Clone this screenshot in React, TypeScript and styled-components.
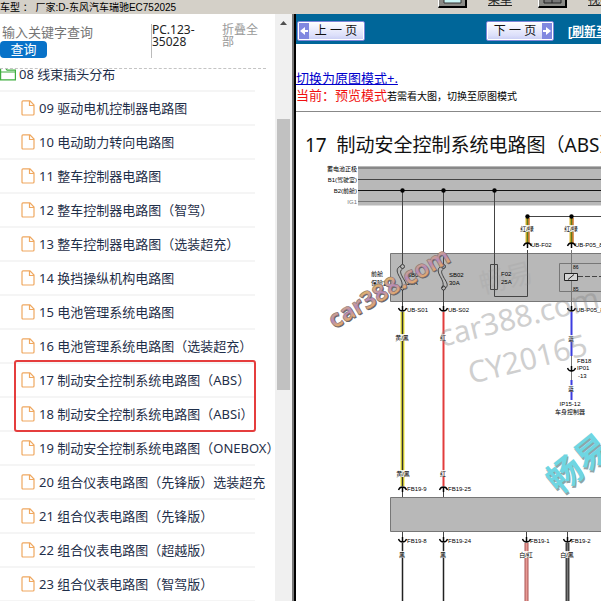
import React from "react";
import styled, { createGlobalStyle, css } from "styled-components";

const sans = `"Noto Sans", "Noto Sans CJK SC", sans-serif`;
const arial = `"Liberation Sans", "Noto Sans CJK SC", sans-serif`;

const GlobalStyle = createGlobalStyle`
  *, *::before, *::after { box-sizing: border-box; }
  body { margin: 0; background: #fff; font-family: ${sans}; overflow: hidden; }
`;

const Page = styled.div`
  display: flex;
  flex-direction: column;
  height: 100vh;
`;

const TopBar = styled.header`
  display: flex;
  flex: none;
  justify-content: space-between;
  height: 14px;
  overflow: hidden;
  background: #d4d0c8;
`;

const TopInfo = styled.div`
  display: flex;
  flex-direction: column;
`;

const TabEdges = styled.div`
  display: flex;
  gap: 5px;
  height: 1px;
`;

const TabEdge = styled.span<{ $width: number }>`
  width: ${(p) => p.$width}px;
  background: #000;
`;

const Vehicle = styled.div`
  height: 16px;
  font: 10px/16px ${arial};
  white-space: pre;
`;

const Tools = styled.nav`
  display: flex;
  flex: none;
  gap: 21px;
  height: 8px;
  align-items: flex-end;
`;

const ToolIcon = styled.button`
  width: 29px;
  height: 24px;
  padding: 0;
  border: 2px solid #000;
  border-left-color: #fff;
  border-width: 0 2px 2px 1px;
  background: #8a8a86;
  svg { display: block; width: 100%; height: 100%; }
`;

const ToolLink = styled.a<{ $last?: boolean }>`
  width: ${(p) => (p.$last ? 13 : 29)}px;
  overflow: hidden;
  color: #222;
  font: 12px/16px ${arial};
  white-space: nowrap;
`;

const Body = styled.div`
  display: flex;
  flex: 1;
  min-height: 0;
`;

const Sidebar = styled.aside`
  display: flex;
  flex: none;
  width: 292px;
`;

const Panel = styled.div`
  display: flex;
  flex: 1;
  flex-direction: column;
  min-width: 0;
  overflow: hidden;
`;

const SearchForm = styled.form`
  display: flex;
  flex: none;
  height: 55px;
  margin-right: 9px;
  padding-top: 10px;
  border-bottom: 1px dashed #c4c4c4;
`;

const SearchFields = styled.div`
  display: flex;
  flex-direction: column;
  align-items: flex-start;
  width: 151px;
`;

const SearchInput = styled.input`
  width: 140px;
  height: 17px;
  padding: 0 2px;
  border: 0;
  outline: 0;
  background: transparent;
  font: 13px/17px ${sans};
  &::placeholder { color: #757575; opacity: 1; }
`;

const SearchButton = styled.button`
  width: 47px;
  height: 17px;
  padding: 0;
  border: 0;
  border-radius: 4px;
  background: #0872c8;
  color: #fff;
  font: 13px/17px ${sans};
`;

const Code = styled.div`
  width: 71px;
  height: 34px;
  border-left: 1px solid #bbb;
  font: 12px/12px ${sans};
  color: #222;
`;

const Collapse = styled.button`
  width: 38px;
  height: 24px;
  padding: 0;
  border: 0;
  background: none;
  color: #999;
  font: 12px/12px ${sans};
  text-align: left;
`;

const TreeViewport = styled.div`
  flex: 1;
  min-height: 0;
  overflow: hidden;
`;

const Tree = styled.ul`
  margin: -11px 0 0;
  padding: 0;
  list-style: none;
`;

const Row = styled.li<{ $root?: boolean }>`
  display: flex;
  align-items: center;
  gap: ${(p) => (p.$root ? 3 : 4)}px;
  width: 255px;
  height: 34px;
  padding-left: ${(p) => (p.$root ? 0 : 21)}px;
  border-bottom: 2px solid #f5f5f5;
  svg { flex: none; }
`;

const RowLink = styled.a`
  color: #1f2f4a;
  font: 13px/20px ${sans};
  text-decoration: none;
  white-space: nowrap;
`;

const Marked = styled.li`
  position: relative;
  list-style: none;
  ul { margin: 0; padding: 0; }
  &::after {
    content: "";
    position: absolute;
    inset: -4px auto 0 14px;
    width: 242px;
    border: 2px solid #e53d3d;
    border-radius: 3px;
    pointer-events: none;
  }
`;

const Scrollbar = styled.div`
  display: flex;
  flex: none;
  flex-direction: column;
  align-items: center;
  width: 17px;
  padding-top: 6px;
  background: #f0f0f0;
`;

const Thumb = styled.div`
  width: 13px;
  height: 271px;
  margin-top: 93px;
  background: #c1c1c1;
`;

const Splitter = styled.div`
  flex: none;
  width: 4px;
  border-left: 2px solid #777;
  background: #000;
`;

const Main = styled.main`
  flex: 1;
  min-width: 0;
  overflow: hidden;
`;

const Pager = styled.nav`
  display: flex;
  align-items: center;
  height: 30px;
  padding: 3px 0 0 1px;
  background: #069;
`;

const PageButton = styled.button<{ $next?: boolean }>`
  display: flex;
  flex: none;
  flex-direction: ${(p) => (p.$next ? "row-reverse" : "row")};
  width: 68px;
  height: 20px;
  padding: 1px;
  border: 1px solid #7f86d8;
  border-radius: 2px;
  background: linear-gradient(#fff, #dcdffa 75%, #c7ccf4);
  box-shadow: inset 0 0 0 1px #fff;
  color: #111;
  font: 12px/16px ${arial};
  span { flex: 1; text-align: center; white-space: nowrap; }
  svg { flex: none; }
  ${(p) => p.$next && css`margin-left: 121px;`}
`;

const Refresh = styled.a`
  margin: 2px 0 0 14px;
  color: #fff;
  font: bold 12px/18px ${arial};
  white-space: nowrap;
`;

const Mode = styled.section`
  height: 68px;
  padding-top: 26px;
  border-bottom: 1px solid #888;
`;

const ModeLine = styled.p`
  margin: 0;
  height: 17px;
  color: #f01010;
  font: 13px/17px ${sans};
  white-space: nowrap;
  small { color: #000; font-size: 10px; }
  a { color: #00c; }
`;

const Title = styled.h1`
  margin: 19px 0 0 9px;
  height: 27px;
  color: #111;
  font: 19px/28px ${sans};
  white-space: pre;
`;

const Diagram = styled.svg`
  display: block;
  width: 400px;
  height: 460px;
  font-family: ${arial};
  font-size: 6px;
`;

const FileIcon = () => (
  <svg width="14" height="16" viewBox="0 0 14 16" fill="none" stroke="#efa860" strokeWidth="1.2" aria-hidden>
    <path d="M2 .8h7l4 4.2v9q0 1-1 1H2q-1 0-1-1V2q0-1.200 1-1.200ZM8.500 1v4.500H13" />
  </svg>
);

const FolderIcon = () => (
  <svg width="16" height="14" viewBox="0 0 16 14" fill="none" stroke="#3fae3f" strokeWidth="1.2" aria-hidden>
    <path d="M.6 12.800V1.200h5l1.500 2h8.300v9.600ZM.6 5h15" />
  </svg>
);

const Arrow = ({ next }: { next?: boolean }) => (
  <svg width="10" height="16" viewBox="0 0 10 16" aria-hidden>
    <path fill="#8088e0" d="M0 0h10v16H0z" />
    <path fill="#fff" d={next ? "M1 7h3V4l5 4-5 4V9H1Z" : "M9 7H6V4L1 8l5 4V9h3Z"} />
  </svg>
);

const before = [
  "09 驱动电机控制器电路图",
  "10 电动助力转向电路图",
  "11 整车控制器电路图",
  "12 整车控制器电路图（智驾）",
  "13 整车控制器电路图（选装超充）",
  "14 换挡操纵机构电路图",
  "15 电池管理系统电路图",
  "16 电池管理系统电路图（选装超充）",
];
const marked = ["17 制动安全控制系统电路图（ABS）", "18 制动安全控制系统电路图（ABSi）"];
const after = [
  "19 制动安全控制系统电路图（ONEBOX）",
  "20 组合仪表电路图（先锋版）选装超充",
  "21 组合仪表电路图（先锋版）",
  "22 组合仪表电路图（超越版）",
  "23 组合仪表电路图（智驾版）",
];

const TreeRow = ({ text }: { text: string }) => (
  <Row>
    <FileIcon />
    <RowLink href="#">{text}</RowLink>
  </Row>
);

/* Socket opening upward (pin enters from above) or downward. */
const Socket = ({ x, y, down }: { x: number; y: number; down?: boolean }) => (
  <g fill="none" stroke="#000">
    <path strokeWidth="1.300" d={down ? `M${x - 4} ${y + 3}q1-3 4-3t4 3` : `M${x - 4} ${y - 3}q1 3 4 3t4-3`} />
    <path strokeWidth="1.500" d={down ? `M${x} ${y}v5` : `M${x} ${y}v-5`} />
  </g>
);

const WireLabel = ({ x, y, children }: { x: number; y: number; children: string }) => {
  const w = children.length > 1 ? 15 : 7;
  return (
    <g>
      <rect x={x - w / 2} y={y - 6} width={w} height="7" fill="#fff" opacity=".85" />
      <text x={x} y={y} textAnchor="middle">{children}</text>
    </g>
  );
};

const Fuse = ({ x }: { x: number }) => (
  <g fill="none" stroke="#222" strokeWidth=".8">
    <circle cx={x} cy="266.500" r="2" fill="#b8b8b8" />
    <circle cx={x} cy="288" r="2" fill="#b8b8b8" />
    <path d={`M${x - 2} 266c-4 2-4 5-2 9s5 8 3 13M${x} 269c-3 2-2 4 0 8s6 8 2 11`} />
  </g>
);

const Circuit = () => (
  <Diagram viewBox="296 158 400 460" role="img" aria-label="ABS">
    <path fill="#b8b8b8" d="M358 166h338v39.500H358z" />
    <path stroke="#888" strokeWidth="2" d="M358 168h338" />
    <path stroke="#444" d="M358 179.500h338" />
    <path stroke="#111" d="M358 190.500h338" />
    <path stroke="#777" d="M358 201.500h338" />
    <g textAnchor="end">
      <text x="357" y="171">蓄电池正极</text>
      <text x="357" y="182">B1(驾驶室)</text>
      <text x="357" y="193">B2(前舱)</text>
      <text x="357" y="204" fill="#777">IG1</text>
    </g>

    <path fill="#b8b8b8" stroke="#777" d="M390.500 253.500H700v48H390.500z" />
    <path fill="#b8b8b8" stroke="#777" d="M390.500 497.500H700v34H390.500z" />

    <g fill="none" stroke="#444">
      <path d="M402.500 191v73M402.500 290v16M443.500 191v73M443.500 290v16" />
      <path d="M494.500 191v105.500h33V250M527.500 216.500H700" />
      <path d="M571.500 250v56M571.500 354v26" stroke="#777" />
      <path d="M402.500 490v7M443.500 490v7M402.500 532v7M443.500 532v7M526.500 532v7M567.500 532v7" />
    </g>
    <g fill="#000">
      <circle cx="402.500" cy="190.500" r="2.200" />
      <circle cx="443.500" cy="190.500" r="2.200" />
      <circle cx="494.500" cy="190.500" r="2.200" />
    </g>

    <path stroke="#e0b52a" strokeWidth="4" d="M527.500 218v25M571.500 218v25" />
    <path stroke="#5b7a22" strokeWidth="1.500" d="M527.500 218v25M571.500 218v25" />
    <path stroke="#c25434" d="M529 218v25M573 218v25" />
    <g fill="#000">
      <circle cx="527.500" cy="216.500" r="2.200" />
      <circle cx="571.500" cy="216.500" r="2.200" />
    </g>
    <WireLabel x={527} y={231}>红/绿</WireLabel>
    <WireLabel x={571} y={231}>红/绿</WireLabel>
    <Socket x={527.5} y={243} down />
    <Socket x={571.5} y={243} down />
    <text x="531" y="247">UB-F02</text>
    <text x="575" y="247">UB-P05_8</text>

    <text x="371" y="276">前舱</text>
    <text x="371" y="285">保险盒</text>
    <Fuse x={402.5} />
    <Fuse x={443.5} />
    <text x="407" y="277">SB01</text>
    <text x="407" y="285">25A</text>
    <text x="449" y="277">SB02</text>
    <text x="449" y="285">30A</text>
    <path fill="none" stroke="#444" d="M490.500 264.500h7v25h-7z" />
    <text x="501" y="276">F02</text>
    <text x="501" y="284">25A</text>
    <path fill="none" stroke="#777" d="M559.500 263.500H640v28h-80.500z" />
    <path fill="#d5d5d5" stroke="#222" d="M564.500 273.500h13v7h-13zM568 279.500l6-5" />
    <path stroke="#444" strokeDasharray="5 2" d="M578 276.500h60" />
    <text x="573" y="269" fontSize="5">86</text>
    <text x="573" y="291" fontSize="5">85</text>

    <path stroke="#f2ea38" strokeWidth="4" d="M402.500 312v174" />
    <path stroke="#333" strokeWidth="1.500" d="M402.500 312v174" />
    <path stroke="#e23c3c" strokeWidth="2" d="M443.500 312v174" />
    <path stroke="#3c3ce0" strokeWidth="2" d="M571.500 312v44M571.500 380v20" />
    <Socket x={402.5} y={311} />
    <Socket x={443.5} y={311} />
    <Socket x={571.5} y={311} />
    <Socket x={571.5} y={371} />
    <text x="407" y="312">UB-S01</text>
    <text x="448" y="312">UB-S02</text>
    <text x="576" y="312">UB-P05_8</text>
    <WireLabel x={402} y={340}>黄/黑</WireLabel>
    <WireLabel x={443} y={340}>红</WireLabel>
    <WireLabel x={571} y={341}>蓝</WireLabel>
    <WireLabel x={571} y={391}>蓝</WireLabel>
    <text x="577" y="363">FB18</text>
    <text x="577" y="370">IP01</text>
    <text x="578" y="378">-13</text>
    <text x="570" y="406" textAnchor="middle">IP15-12</text>
    <text x="570" y="414" textAnchor="middle">车身控制器</text>

    <WireLabel x={403} y={476}>黄/黑</WireLabel>
    <WireLabel x={443} y={476}>红</WireLabel>
    <Socket x={402.5} y={487} down />
    <Socket x={443.5} y={487} down />
    <text x="407" y="491">FB19-9</text>
    <text x="448" y="491">FB19-25</text>

    <path stroke="#222" strokeWidth="1.500" d="M402.500 543v75M443.500 543v75" />
    <path stroke="#a55" strokeWidth="4" d="M526.500 543v75" />
    <path stroke="#e79a94" strokeWidth="2" d="M526.500 543v75" />
    <path stroke="#444" strokeWidth="4" d="M567.500 543v75" />
    <path stroke="#777" d="M567.500 543v75" />
    <Socket x={402.5} y={542} />
    <Socket x={443.5} y={542} />
    <Socket x={526.5} y={542} />
    <Socket x={567.5} y={542} />
    <text x="407" y="543">FB19-8</text>
    <text x="448" y="543">FB19-24</text>
    <text x="530" y="543">FB19-1</text>
    <text x="571" y="543">FB19-2</text>
    <WireLabel x={402} y={557}>黑</WireLabel>
    <WireLabel x={443} y={557}>黑</WireLabel>
    <WireLabel x={526} y={557}>白/红</WireLabel>
    <WireLabel x={567} y={557}>白/黑</WireLabel>

    <defs>
      <linearGradient id="gold" x1="0" y1="0" x2="0" y2="1">
        <stop offset=".25" stopColor="#e8b860" />
        <stop offset=".55" stopColor="#b48abb" />
        <stop offset=".8" stopColor="#e8b060" />
      </linearGradient>
    </defs>
    <g fontFamily='"Noto Sans", "Noto Sans CJK SC", sans-serif'>
      <g fill="#888" opacity=".4">
        <text transform="translate(442 347) rotate(-14)" fontSize="30">car388.com</text>
        <text transform="translate(471 384) rotate(-14)" fontSize="30">CY20165</text>
        <text transform="translate(482 294) rotate(-14)" fontSize="27" opacity=".3">畅易</text>
      </g>
      <g fontWeight="bold">
        <text transform="translate(335 330) rotate(-30)" fontSize="24" fill="#666">car388.com</text>
        <text transform="translate(334 329) rotate(-30)" fontSize="24" fill="url(#gold)" stroke="#7d6a70" strokeWidth=".5">car388.com</text>
        <text transform="translate(560 497) rotate(-39)" fontSize="35" fill="#8fa5a8">畅易</text>
        <text transform="translate(559 495) rotate(-39)" fontSize="35" fill="#6fd6e2">畅易</text>
      </g>
    </g>
  </Diagram>
);

export default function App() {
  return (
    <>
      <GlobalStyle />
      <Page>
        <TopBar>
          <TopInfo>
            <TabEdges>
              <TabEdge $width={100} />
              <TabEdge $width={83} />
              <TabEdge $width={84} />
            </TabEdges>
            <Vehicle>车型 ： 厂家:D-东风汽车瑞驰EC752025</Vehicle>
          </TopInfo>
          <Tools>
            <ToolIcon aria-label="菜单">
              <svg viewBox="0 0 26 22"><path fill="#c9f5f5" stroke="#333" d="M5 2h17v17H5z" /></svg>
            </ToolIcon>
            <ToolLink href="#">菜单</ToolLink>
            <ToolIcon aria-label="视频">
              <svg viewBox="0 0 26 22"><path fill="#777" stroke="#222" d="M5 2h17v17H5zM13 2v17" /></svg>
            </ToolIcon>
            <ToolLink href="#" $last>视频</ToolLink>
          </Tools>
        </TopBar>
        <Body>
          <Sidebar>
            <Panel>
              <SearchForm onSubmit={(e) => e.preventDefault()}>
                <SearchFields>
                  <SearchInput aria-label="输入关键字查询" placeholder="输入关键字查询" />
                  <SearchButton>查询</SearchButton>
                </SearchFields>
                <Code>PC.123-<br />35028</Code>
                <Collapse type="button">折叠全部</Collapse>
              </SearchForm>
              <TreeViewport>
                <Tree>
                  <Row $root>
                    <FolderIcon />
                    <RowLink href="#">08 线束插头分布</RowLink>
                  </Row>
                  {before.map((t) => <TreeRow key={t} text={t} />)}
                  <Marked><ul>{marked.map((t) => <TreeRow key={t} text={t} />)}</ul></Marked>
                  {after.map((t) => <TreeRow key={t} text={t} />)}
                </Tree>
              </TreeViewport>
            </Panel>
            <Scrollbar>
              <svg width="9" height="6" viewBox="0 0 9 6" aria-hidden><path fill="#505050" d="M1 5l3.500-4L8 5z" /></svg>
              <Thumb />
            </Scrollbar>
          </Sidebar>
          <Splitter />
          <Main>
            <Pager>
              <PageButton><Arrow /><span>上 一 页</span></PageButton>
              <PageButton $next><Arrow next /><span>下 一 页</span></PageButton>
              <Refresh href="#">[刷新至</Refresh>
            </Pager>
            <Mode>
              <ModeLine><a href="#">切换为原图模式+.</a></ModeLine>
              <ModeLine>当前：预览模式<small>若需看大图，切换至原图模式</small></ModeLine>
            </Mode>
            <Title>17  制动安全控制系统电路图（ABS）</Title>
            <Circuit />
          </Main>
        </Body>
      </Page>
    </>
  );
}
